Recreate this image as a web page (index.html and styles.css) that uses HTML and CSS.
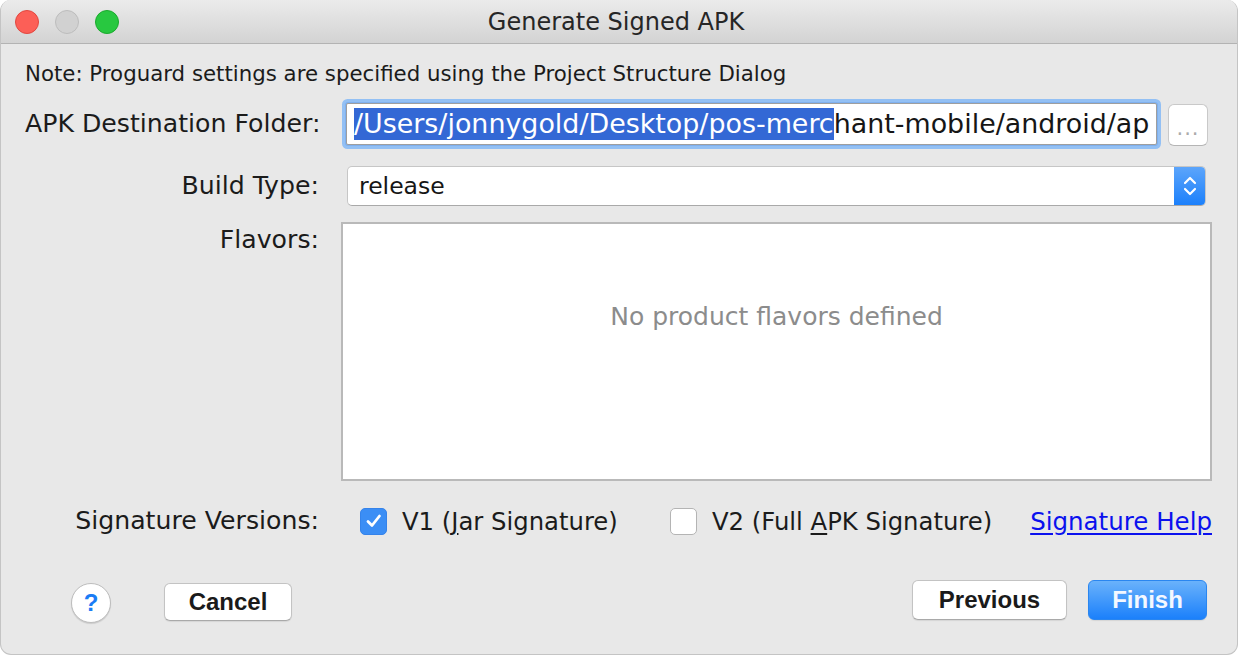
FILE: index.html
```html
<!DOCTYPE html>
<html>
<head>
<meta charset="utf-8">
<title>Generate Signed APK</title>
<link rel="stylesheet" href="styles.css">
</head>
<body>
<div class="window">
  <div class="titlebar">
    <div class="lights">
      <span class="light red"></span>
      <span class="light gray"></span>
      <span class="light green"></span>
    </div>
    <div class="title">Generate Signed APK</div>
    <div></div>
  </div>
  <div class="content">
    <div class="note">Note: Proguard settings are specified using the Project Structure Dialog</div>

    <div class="row row-apk">
      <div class="label">APK Destination Folder:</div>
      <div class="field focused">
        <span class="sel">/Users/jonnygold/Desktop/pos-merc</span><span class="rest">hant-mobile/android/ap</span>
      </div>
      <div class="browse">...</div>
    </div>

    <div class="row row-build">
      <div class="label">Build Type:</div>
      <div class="combo">
        <span class="combo-text">release</span>
        <span class="stepper">
          <svg width="16" height="26" viewBox="0 0 16 26"><polyline points="3,10 8,5 13,10" fill="none" stroke="#fff" stroke-width="2.2" stroke-linecap="round" stroke-linejoin="round"/><polyline points="3,16 8,21 13,16" fill="none" stroke="#fff" stroke-width="2.2" stroke-linecap="round" stroke-linejoin="round"/></svg>
        </span>
      </div>
    </div>

    <div class="row row-flavors">
      <div class="label label-top">Flavors:</div>
      <div class="list">No product flavors defined</div>
    </div>

    <div class="row row-sig">
      <div class="label">Signature Versions:</div>
      <div class="sig-items">
        <div class="check-item v1">
          <span class="checkbox checked">
            <svg width="18" height="16" viewBox="0 0 18 16"><polyline points="3,8.5 7,12.5 14.5,3" fill="none" stroke="#fff" stroke-width="2.8" stroke-linecap="round" stroke-linejoin="round"/></svg>
          </span>
          <span class="check-text">V1 (<u>J</u>ar Signature)</span>
        </div>
        <div class="check-item v2">
          <span class="checkbox"></span>
          <span class="check-text">V2 (Full <u>A</u>PK Signature)</span>
        </div>
        <a class="help-link" href="#">Signature Help</a>
      </div>
    </div>

    <div class="row row-buttons">
      <div class="help-btn">?</div>
      <div class="btn cancel">Cancel</div>
      <div class="spacer"></div>
      <div class="btn previous">Previous</div>
      <div class="btn primary">Finish</div>
    </div>
  </div>
</div>
</body>
</html>
```

FILE: styles.css
```css
html, body {
  margin: 0;
  padding: 0;
  background: #ffffff;
}

body {
  font-family: "DejaVu Sans", "Noto Sans", sans-serif;
  color: #1b1b1b;
}

.window {
  width: 1238px;
  height: 655px;
  box-sizing: border-box;
  border-radius: 11px;
  overflow: hidden;
  background: #e8e8e8;
  border: 1px solid #c4c4c4;
  border-top: none;
  display: flex;
  flex-direction: column;
}

.titlebar {
  height: 43px;
  flex: none;
  border-bottom: 1px solid #b3b3b3;
  background: linear-gradient(#ebebeb, #d3d3d3);
  display: grid;
  grid-template-columns: 1fr auto 1fr;
  align-items: center;
}

.lights {
  display: flex;
  gap: 16px;
  padding-left: 14px;
}

.light {
  width: 22px;
  height: 22px;
  border-radius: 50%;
  box-sizing: content-box;
}

.light.red { background: #fc5f57; border: 1px solid #e1473f; }
.light.gray { background: #d1d1d1; border: 1px solid #bcbcbc; }
.light.green { background: #28c840; border: 1px solid #1ba92d; }

.title {
  font-size: 24px;
  color: #262626;
  margin-right: 6px;
}

.content {
  padding: 0 25px 0 24px;
  display: flex;
  flex-direction: column;
}

.note {
  font-size: 21.3px;
  line-height: 30px;
  margin-top: 15px;
  color: #1b1b1b;
}

.row {
  display: flex;
  align-items: center;
}

.label {
  width: 294px;
  flex: none;
  text-align: right;
  font-size: 25.2px;
  line-height: 30px;
  color: #1b1b1b;
  white-space: nowrap;
}

/* APK destination row */
.row-apk {
  margin-top: 14px;
  height: 42px;
}

.field {
  margin-left: 27px;
  width: 811px;
  height: 42px;
  box-sizing: border-box;
  border: 1px solid #9e9e9e;
  background: #fff;
  display: flex;
  align-items: center;
  padding-left: 7px;
  font-size: 26.9px;
  line-height: 32px;
  white-space: nowrap;
  overflow: hidden;
}

.field.focused {
  box-shadow: 0 0 0 1px #7fb0ee, 0 0 0 4px #93c0f4;
  border-radius: 2px;
}

.sel {
  background: #3368d5;
  color: #fff;
}

.rest {
  color: #161616;
}

.browse {
  margin-left: 11px;
  width: 40px;
  height: 42px;
  box-sizing: border-box;
  margin-top: 1px;
  border: 1px solid #c9c9c9;
  border-bottom-color: #b5b5b5;
  border-radius: 6px;
  background: #fff;
  color: #ababab;
  font-size: 21px;
  letter-spacing: 1px;
  text-align: center;
  line-height: 46px;
}

/* Build type row */
.row-build {
  margin-top: 21px;
  height: 40px;
}

.combo {
  margin-left: 28px;
  width: 859px;
  height: 40px;
  box-sizing: border-box;
  border: 1px solid #c6c6c6;
  border-bottom-color: #a9a9a9;
  border-radius: 5px;
  background: #fff;
  display: flex;
  align-items: center;
  overflow: hidden;
}

.combo-text {
  flex: 1;
  padding-left: 11px;
  font-size: 23.5px;
  color: #161616;
}

.stepper {
  width: 32px;
  height: 40px;
  margin-right: -1px;
  background: linear-gradient(#5ea6fb, #1a7ffb);
  display: flex;
  align-items: center;
  justify-content: center;
}

/* Flavors row */
.row-flavors {
  margin-top: 16px;
  align-items: flex-start;
}

.label-top {
  padding-top: 3px;
}

.list {
  margin-left: 22px;
  width: 872px;
  height: 259px;
  box-sizing: border-box;
  border: 2px solid #b9b9b9;
  background: #fff;
  text-align: center;
  font-size: 25px;
  line-height: 30px;
  color: #8c8c8c;
  padding-top: 78px;
}

/* Signature row */
.row-sig {
  margin-top: 20px;
  height: 40px;
}

.sig-items {
  flex: 1;
  display: flex;
  align-items: center;
  margin-left: 41px;
}

.check-item {
  display: flex;
  align-items: center;
  gap: 15px;
}

.check-item.v1 {
  width: 310px;
}

.checkbox {
  width: 27px;
  height: 27px;
  box-sizing: border-box;
  border-radius: 5px;
  background: #fff;
  border: 1px solid #b4b4b4;
  display: flex;
  align-items: center;
  justify-content: center;
}

.checkbox.checked {
  background: #3b8ef5;
  border-color: #3583ea;
}

.check-text {
  font-size: 24.3px;
  color: #1b1b1b;
  white-space: nowrap;
}

.check-text u {
  text-decoration-thickness: 2px;
  text-underline-offset: 3px;
}

.help-link {
  margin-left: auto;
  font-size: 24.5px;
  color: #0b11ee;
  text-decoration: underline;
  text-decoration-thickness: 2px;
  text-underline-offset: 3px;
}

/* Buttons row */
.row-buttons {
  margin-top: 39px;
  align-items: flex-start;
  padding-right: 5px;
}

.help-btn {
  margin-left: 46px;
  margin-top: 3px;
  width: 40px;
  height: 40px;
  box-sizing: border-box;
  border-radius: 50%;
  background: #fff;
  border: 1px solid #bdbdbd;
  box-shadow: 0 1px 1px rgba(0,0,0,0.12);
  color: #1a7cf5;
  font-family: "Liberation Sans", sans-serif;
  font-size: 24px;
  font-weight: bold;
  text-align: center;
  line-height: 38px;
}

.btn {
  height: 40px;
  box-sizing: border-box;
  border-radius: 6px;
  background: #fff;
  border: 1px solid #c3c3c3;
  border-bottom-color: #a9a9a9;
  box-shadow: 0 1px 1px rgba(0,0,0,0.08);
  font-family: "Liberation Sans", sans-serif;
  font-weight: bold;
  font-size: 24px;
  color: #1a1a1a;
  display: flex;
  align-items: center;
  justify-content: center;
}

.btn.cancel {
  margin-left: 53px;
  margin-top: 3px;
  width: 128px;
  height: 38px;
}

.spacer {
  flex: 1;
}

.btn.previous {
  width: 155px;
}

.btn.primary {
  margin-left: 21px;
  width: 119px;
  border: 1px solid #2a86f0;
  background: linear-gradient(#6ab2fb, #1b80fb);
  color: #f4f8ff;
}
```
